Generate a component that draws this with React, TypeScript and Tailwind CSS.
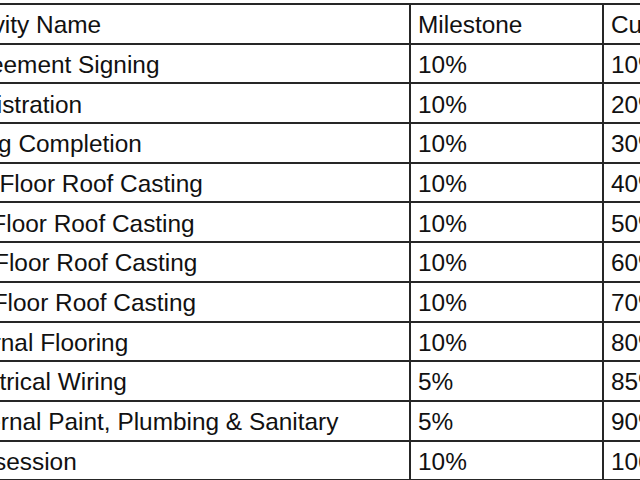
import React from "react";

const rows: [string, string, string][] = [
  ["Agreement Signing", "10%", "10%"],
  ["Registration", "10%", "20%"],
  ["Piling Completion", "10%", "30%"],
  ["2nd Floor Roof Casting", "10%", "40%"],
  ["1st Floor Roof Casting", "10%", "50%"],
  ["3rd Floor Roof Casting", "10%", "60%"],
  ["4th Floor Roof Casting", "10%", "70%"],
  ["Internal Flooring", "10%", "80%"],
  ["Electrical Wiring", "5%", "85%"],
  ["External Paint, Plumbing & Sanitary", "5%", "90%"],
  ["Possession", "10%", "100%"],
];

export default function App() {
  const cell =
    "border-2 border-[#262626] h-[39.7px] pl-[7px] pr-2 pt-[3px] text-left align-middle whitespace-nowrap font-normal overflow-hidden";
  return (
    <div className="w-[640px] h-[480px] overflow-hidden bg-white">
      <table
        className="table-fixed border-collapse w-[820px] ml-[-57px] mt-[3px] text-[24.4px] leading-none text-[#111]"
        style={{ fontFamily: '"Liberation Sans", Arial, sans-serif' }}
      >
        <colgroup>
          <col className="w-[466px]" />
          <col className="w-[193px]" />
          <col className="w-[161px]" />
        </colgroup>
        <thead>
          <tr>
            <th className={cell}>Activity Name</th>
            <th className={cell}>Milestone</th>
            <th className={cell}>Cumulative</th>
          </tr>
        </thead>
        <tbody>
          {rows.map((r) => (
            <tr key={r[0]}>
              <td className={cell}>{r[0]}</td>
              <td className={cell}>{r[1]}</td>
              <td className={cell}>{r[2]}</td>
            </tr>
          ))}
        </tbody>
      </table>
    </div>
  );
}
